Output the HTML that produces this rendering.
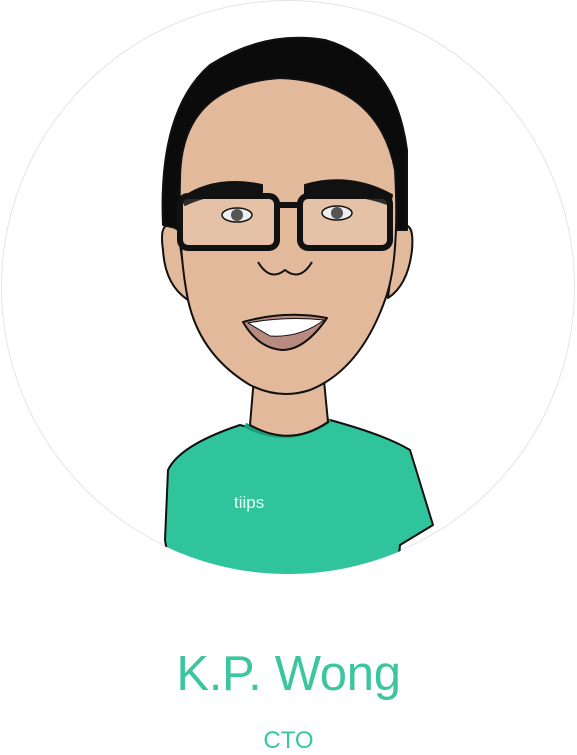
<!DOCTYPE html>
<html><head><style>
html,body{margin:0;padding:0;background:#fff;width:577px;height:755px;overflow:hidden}
.n{position:absolute;left:0;width:577px;text-align:center;color:#3cc6a0;font-family:"Liberation Sans",sans-serif}
</style></head><body>
<svg width="577" height="600" style="position:absolute;left:0;top:0">
<defs><clipPath id="c"><circle cx="288" cy="287" r="287"/></clipPath></defs>
<circle cx="288" cy="287" r="286.5" fill="#fff" stroke="#e4e2f2" stroke-width="1"/>
<g clip-path="url(#c)" stroke="#111" stroke-width="2" stroke-linejoin="round">
<path d="M168 470 Q180 445 240 425 Q290 440 330 420 Q385 435 410 450 L433 525 L400 545 L395 600 L175 600 L165 540 Z" fill="#2fc49b"/>
<path d="M245 425 Q288 448 330 420" fill="none" stroke="#1e9c7a" stroke-width="5"/>
<path d="M255 365 L250 425 Q290 448 328 422 L322 360 Z" fill="#e2b99b"/>
<path d="M178 230 Q158 215 163 250 Q165 285 188 300 Z" fill="#e2b99b"/>
<path d="M396 230 Q415 215 412 250 Q408 285 388 298 Z" fill="#e2b99b"/>
<path d="M163 225 Q158 110 210 65 Q265 30 325 40 Q395 60 407 150 L407 230 L185 230 Z" fill="#0b0b0b"/>
<path d="M180 180 Q180 85 280 78 Q378 82 395 170 Q400 260 385 300 Q360 370 310 390 Q280 400 250 385 Q200 355 188 300 Q178 250 180 180 Z" fill="#e2b99b"/>
<path d="M182 198 Q215 175 262 185 L262 197 Q220 188 185 205 Z" fill="#111"/>
<path d="M305 185 Q350 172 392 195 L390 205 Q350 190 305 197 Z" fill="#111"/>
<rect x="180" y="196" width="97" height="52" rx="8" fill="rgba(255,255,255,0.12)" stroke="#111" stroke-width="6"/>
<rect x="300" y="196" width="90" height="52" rx="8" fill="rgba(255,255,255,0.12)" stroke="#111" stroke-width="6"/>
<path d="M277 205 L300 205" stroke-width="6"/>
<ellipse cx="237" cy="215" rx="15" ry="7" fill="#eee" stroke-width="1.5"/>
<circle cx="237" cy="215" r="6" fill="#555" stroke="none"/>
<ellipse cx="337" cy="213" rx="15" ry="7" fill="#eee" stroke-width="1.5"/>
<circle cx="337" cy="213" r="6" fill="#555" stroke="none"/>
<path d="M258 262 Q270 282 285 270 Q300 282 312 262" fill="none"/>
<path d="M243 322 Q285 310 327 318 Q305 350 282 350 Q258 348 243 322 Z" fill="#b88a80"/>
<path d="M248 323 Q285 316 324 320 Q300 338 270 336 Z" fill="#fff" stroke-width="1"/>
<text x="234" y="508" fill="#e8fff6" stroke="none" font-family="Liberation Sans,sans-serif" font-size="17">tiips</text>
</g>
</svg>
<div class="n" style="top:646px;font-size:49px;line-height:56px;letter-spacing:-0.3px">K.P. Wong</div>
<div class="n" style="top:727px;font-size:24px;line-height:28px">CTO</div>
</body></html>
